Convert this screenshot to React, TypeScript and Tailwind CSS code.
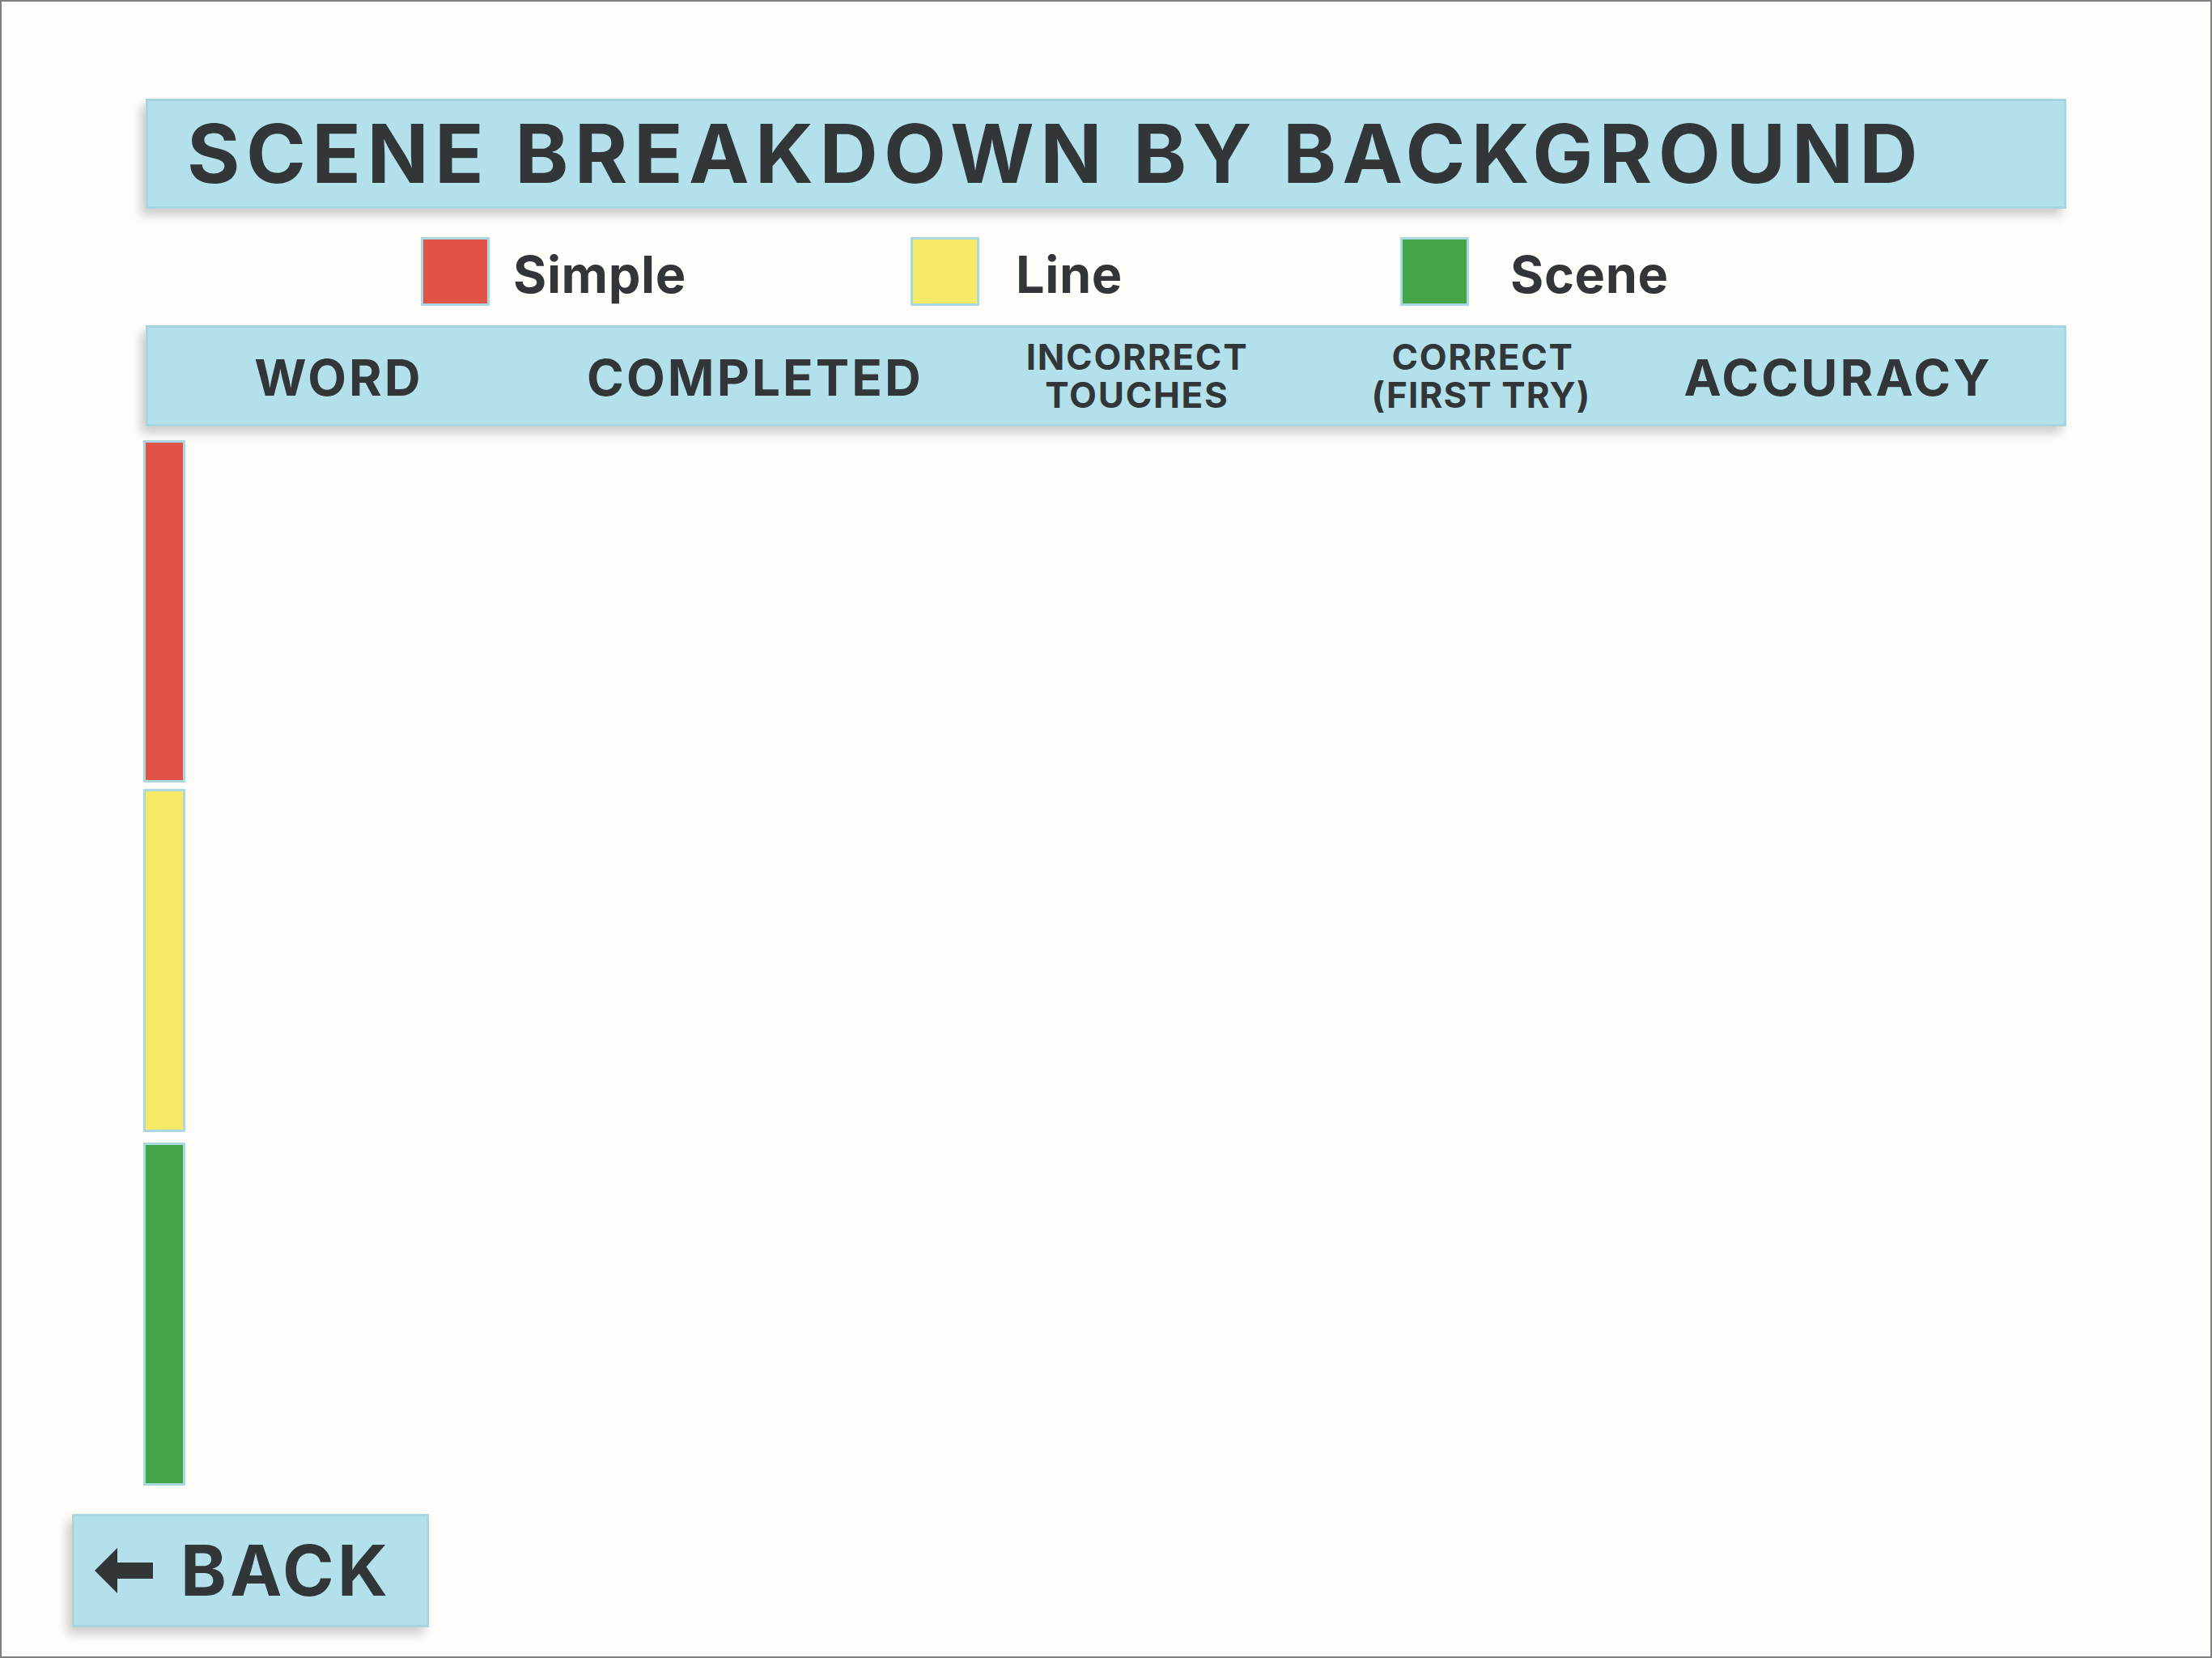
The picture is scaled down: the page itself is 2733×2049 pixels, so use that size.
import React from "react";

const BLUE = "bg-[#b2e1ec] border-[3px] border-[#a6d6df] shadow-[-6px_8px_12px_rgba(0,0,0,0.2)]";

function LegendItem({ color, label, gap }: { color: string; label: string; gap: string }) {
  return (
    <div className={`w-[605px] flex items-center ${gap}`}>
      <div className={`w-[85px] h-[85px] border-[3px] border-[#a9d8e0] ${color}`} />
      <span className="text-[63px] font-bold leading-none tracking-[0.01em] pt-[8px]">{label}</span>
    </div>
  );
}

export default function App() {
  return (
    <div className="w-[2733px] h-[2049px] border-2 border-[#7f7f7f] bg-[#fefdf9] flex flex-col text-[#323638] font-['Inter',sans-serif]">
      {/* Title */}
      <div className={`ml-[178px] mt-[120px] w-[2373px] h-[136px] flex items-center pl-[48px] ${BLUE}`}>
        <h1 className="text-[100px] font-bold leading-none tracking-[0.074em] whitespace-nowrap">
          SCENE BREAKDOWN BY BACKGROUND
        </h1>
      </div>

      {/* Legend */}
      <div className="mt-[35px] ml-[518px] flex h-[85px]">
        <LegendItem color="bg-[#e15347]" label="Simple" gap="gap-[29px]" />
        <LegendItem color="bg-[#f6ea68]" label="Line" gap="gap-[45px]" />
        <LegendItem color="bg-[#43a548]" label="Scene" gap="gap-[51px]" />
      </div>

      {/* Header row */}
      <div className={`ml-[178px] mt-[24px] w-[2373px] h-[125px] grid grid-cols-[471px_558px_386px_464px_418px] items-center pt-[5px] ${BLUE}`}>
        <div className="text-center text-[62px] font-bold leading-none tracking-[0.05em]">WORD</div>
        <div className="text-center text-[62px] font-bold leading-none tracking-[0.05em]">COMPLETED</div>
        <div className="flex flex-col items-center text-[44px] font-bold leading-[47px] tracking-[0.04em] -mt-[5px]">
          <span>INCORRECT</span>
          <span>TOUCHES</span>
        </div>
        <div className="flex flex-col items-center text-[44px] font-bold leading-[47px] tracking-[0.04em] -mt-[5px]">
          <span className="pl-[4px]">CORRECT</span>
          <span className="tracking-[0.025em]">(FIRST TRY)</span>
        </div>
        <div className="text-center text-[62px] font-bold leading-none tracking-[0.05em]">ACCURACY</div>
      </div>

      {/* Category bars */}
      <div className="ml-[175px] mt-[17px] flex flex-col w-[52px]">
        <div className="h-[423px] bg-[#e15347] border-[3px] border-[#a9d8e0]" />
        <div className="mt-[8px] h-[424px] bg-[#f6ea68] border-[3px] border-[#a9d8e0]" />
        <div className="mt-[13px] h-[424px] bg-[#43a548] border-[3px] border-[#a9d8e0]" />
      </div>

      {/* Back button */}
      <button className={`ml-[87px] mt-[35px] w-[441px] h-[140px] flex items-center pl-[25px] gap-[34px] ${BLUE}`}>
        <svg width="72" height="56" viewBox="0 0 72 56" className="shrink-0">
          <polygon points="0,28 28,0 28,56" fill="#323638" />
          <rect x="27" y="18" width="45" height="20" fill="#323638" />
        </svg>
        <span className="text-[86px] font-bold leading-none tracking-[0.05em]">BACK</span>
      </button>
    </div>
  );
}
